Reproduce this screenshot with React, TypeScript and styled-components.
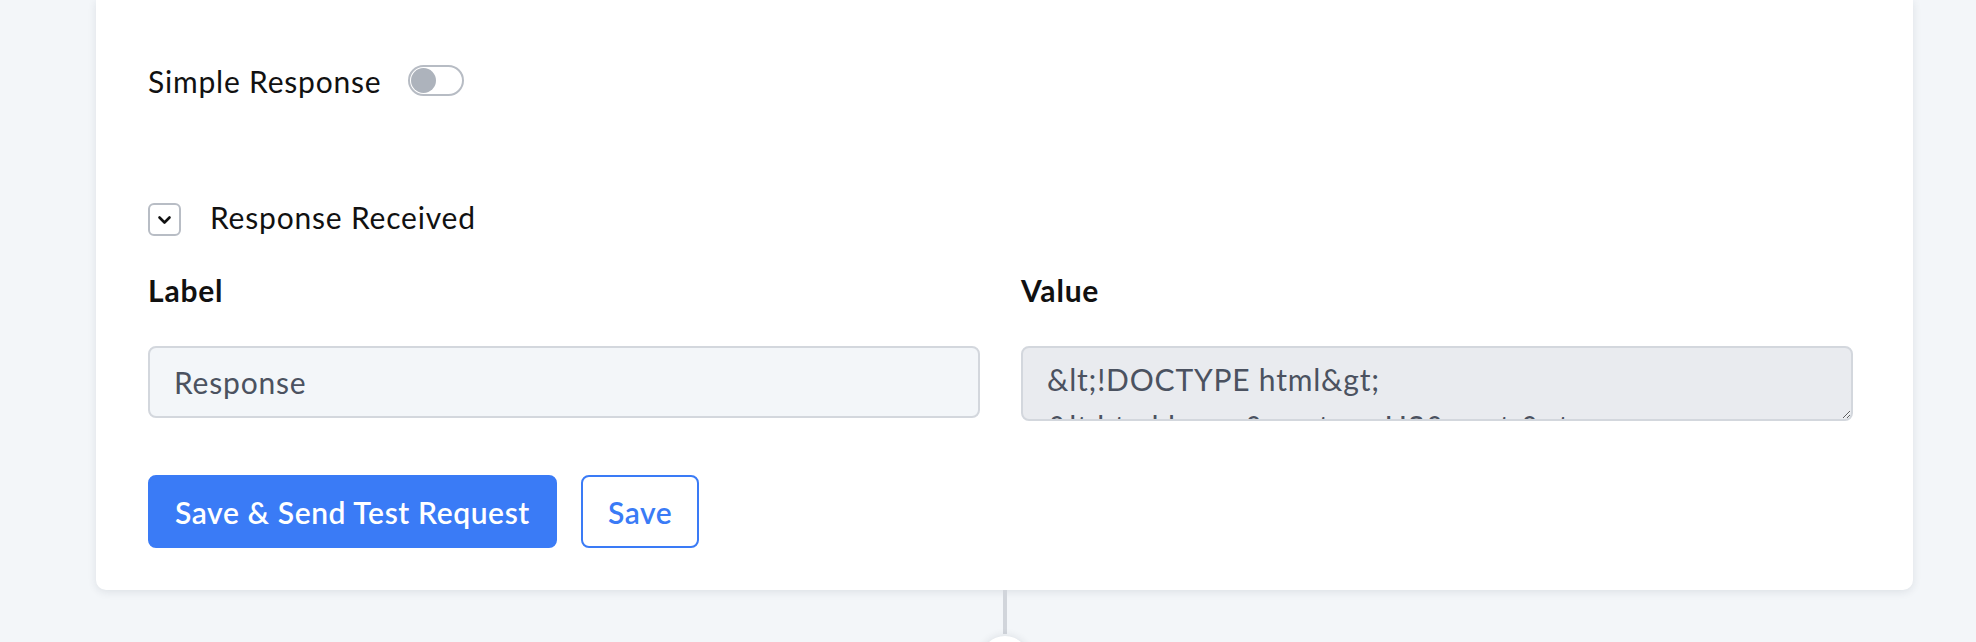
import React from "react";
import styled, { createGlobalStyle } from "styled-components";

const GlobalStyle = createGlobalStyle`
  html, body {
    margin: 0;
    padding: 0;
    background: #f3f6f9;
    font-family: Lato, "Noto Sans", sans-serif;
    color: #111;
  }
  * {
    box-sizing: border-box;
  }
`;

const Page = styled.div`
  display: flex;
  flex-direction: column;
  align-items: stretch;
  padding: 0 63px 0 96px;
  height: 642px;
  overflow: hidden;
`;

const Card = styled.div`
  background: #fff;
  border-radius: 0 0 10px 10px;
  box-shadow: 0 2px 8px rgba(30, 41, 59, 0.1);
  padding: 65px 60px 42px 52px;
  display: flex;
  flex-direction: column;
`;

const ToggleRow = styled.div`
  display: flex;
  align-items: center;
  gap: 27px;
  height: 31px;
`;

const Text = styled.span<{ $lift?: number }>`
  font-size: 30px;
  line-height: 1.2;
  letter-spacing: 0.8px;
  color: #111;
  padding-bottom: ${(p) => p.$lift ?? 0}px;
`;

const Toggle = styled.button`
  width: 56px;
  height: 31px;
  border: 2px solid #b7bcc4;
  border-radius: 16px;
  background: #fff;
  padding: 0 0 0 1px;
  display: flex;
  align-items: center;
  cursor: pointer;

  &::before {
    content: "";
    width: 25px;
    height: 25px;
    border-radius: 50%;
    background: #adb3bc;
  }
`;

const CollapseRow = styled.div`
  display: flex;
  align-items: center;
  gap: 29px;
  margin-top: 107px;
  height: 33px;
`;

const CheckBox = styled.button`
  width: 33px;
  height: 33px;
  border: 2px solid #b8bdc5;
  border-radius: 6px;
  background: #fff;
  padding: 0;
  display: flex;
  align-items: center;
  justify-content: center;
  cursor: pointer;
`;

const Fields = styled.div`
  display: grid;
  grid-template-columns: 1fr 1fr;
  column-gap: 41px;
  margin-top: 36px;
`;

const Field = styled.div`
  display: flex;
  flex-direction: column;
  gap: 38px;
`;

const FieldLabel = styled.label`
  font-size: 30px;
  line-height: 1.2;
  font-weight: 700;
  letter-spacing: 0.8px;
  color: #111;
`;

const TextInput = styled.input`
  height: 72px;
  border: 2px solid #d3d7dd;
  border-radius: 8px;
  background: #f3f6f9;
  padding: 0 24px;
  font-family: inherit;
  font-size: 30px;
  letter-spacing: 0.8px;
  color: #4b5260;
  outline: none;
`;

const TextArea = styled.textarea`
  height: 75px;
  border: 2px solid #d3d7dd;
  border-radius: 8px;
  background: #e9ebef;
  padding: 8px 24px 0;
  font-family: inherit;
  font-size: 30px;
  line-height: 1.56;
  letter-spacing: 0.8px;
  color: #4b5260;
  outline: none;
  resize: vertical;
  overflow: hidden;
`;

const Actions = styled.div`
  display: flex;
  gap: 24px;
  margin-top: 54px;
`;

const Button = styled.button<{ $primary?: boolean }>`
  height: 73px;
  padding: 0 25px;
  border-radius: 8px;
  border: 2px solid #3a7bf6;
  background: ${(p) => (p.$primary ? "#3a7bf6" : "#fff")};
  color: ${(p) => (p.$primary ? "#fff" : "#3a7bf6")};
  font-family: inherit;
  font-size: 30px;
  font-weight: 600;
  letter-spacing: 0.6px;
  cursor: pointer;
`;

const Connector = styled.div`
  display: flex;
  flex-direction: column;
  align-items: center;
`;

const Line = styled.div`
  width: 4px;
  height: 44px;
  background: #d1d5db;
`;

const Node = styled.div`
  width: 48px;
  height: 48px;
  margin-top: 2px;
  border-radius: 50%;
  background: #fff;
  box-shadow: 0 0 8px rgba(30, 41, 59, 0.12);
`;

const responseBody =
  "&lt;!DOCTYPE html&gt;\n&lt;html lang=&quot;en-US&quot;&gt;\n&lt;head&gt;\n&lt;meta charset=&quot;UTF-8&quot;&gt;";

const App = () => {
  return (
    <>
      <GlobalStyle />
      <Page>
        <Card>
          {/* simple response */}
          <ToggleRow>
            <Text>Simple Response</Text>
            <Toggle aria-label="Simple Response" />
          </ToggleRow>
          {/* response received */}
          <CollapseRow>
            <CheckBox aria-label="Collapse">
              <svg width="15" height="10" viewBox="0 0 15 10" fill="none">
                <path d="M2.5 2.5l5 5 5-5" stroke="#111" strokeWidth="2.6" strokeLinecap="round" strokeLinejoin="round" />
              </svg>
            </CheckBox>
            <Text $lift={5}>Response Received</Text>
          </CollapseRow>
          <Fields>
            <Field>
              <FieldLabel>Label</FieldLabel>
              <TextInput defaultValue="Response" />
            </Field>
            <Field>
              <FieldLabel>Value</FieldLabel>
              <TextArea readOnly defaultValue={responseBody} />
            </Field>
          </Fields>
          <Actions>
            <Button $primary>Save &amp; Send Test Request</Button>
            <Button>Save</Button>
          </Actions>
        </Card>
        <Connector>
          <Line />
          <Node />
        </Connector>
      </Page>
    </>
  );
};

export default App;
